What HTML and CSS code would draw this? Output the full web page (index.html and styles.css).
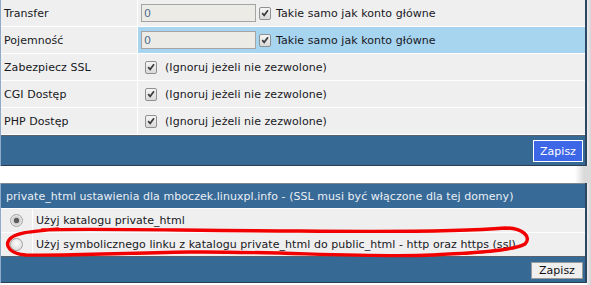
FILE: index.html
```html
<!DOCTYPE html>
<html lang="pl">
<head>
  <meta charset="UTF-8">
  <title>Ustawienia domeny</title>
  <link rel="stylesheet" href="styles.css">
</head>
<body>

<div class="frame">

  <!-- limity konta -->
  <div class="panel">
    <div class="rows">
      <div class="label">Transfer</div>
      <div class="value">
        <input type="text" class="field" value="0">
        <span class="check"><svg viewBox="0 0 12 12"><path d="M2.6 6.2 L5 8.8 L9.6 2.6"/></svg></span>
        <span class="note">Takie samo jak konto główne</span>
      </div>

      <div class="label">Pojemność</div>
      <div class="value hover">
        <input type="text" class="field" value="0">
        <span class="check"><svg viewBox="0 0 12 12"><path d="M2.6 6.2 L5 8.8 L9.6 2.6"/></svg></span>
        <span class="note">Takie samo jak konto główne</span>
      </div>

      <div class="label">Zabezpiecz SSL</div>
      <div class="value indent">
        <span class="check"><svg viewBox="0 0 12 12"><path d="M2.6 6.2 L5 8.8 L9.6 2.6"/></svg></span>
        <span class="note wide">(Ignoruj jeżeli nie zezwolone)</span>
      </div>

      <div class="label">CGI Dostęp</div>
      <div class="value indent">
        <span class="check"><svg viewBox="0 0 12 12"><path d="M2.6 6.2 L5 8.8 L9.6 2.6"/></svg></span>
        <span class="note wide">(Ignoruj jeżeli nie zezwolone)</span>
      </div>

      <div class="label">PHP Dostęp</div>
      <div class="value indent">
        <span class="check"><svg viewBox="0 0 12 12"><path d="M2.6 6.2 L5 8.8 L9.6 2.6"/></svg></span>
        <span class="note wide">(Ignoruj jeżeli nie zezwolone)</span>
      </div>
    </div>
    <div class="bar bar-top">
      <button class="btn btn-primary">Zapisz</button>
    </div>
  </div>

  <div class="gap"></div>

  <!-- private_html -->
  <div class="panel">
    <div class="head">private_html ustawienia dla mboczek.linuxpl.info - (SSL musi być włączone dla tej domeny)</div>
    <div class="opts">
      <div class="radio-cell"><span class="radio on"></span></div>
      <div class="opt">Użyj katalogu private_html</div>
      <div class="radio-cell"><span class="radio"></span></div>
      <div class="opt">Użyj symbolicznego linku z katalogu private_html do public_html - http oraz https (ssl)</div>
    </div>
    <div class="bar bar-bottom">
      <button class="btn">Zapisz</button>
    </div>
  </div>

  <!-- odręczne zaznaczenie -->
  <svg class="scribble" viewBox="0 0 591 285">
    <path d="M42 230 C90 228 200 231 300 231 C400 232 470 231 505 228
             C523 228 532 237 525 244 C513 251 470 253 432 255
             C370 258 270 251 190 252 C120 253 70 256 26 255
             C10 254 5 246 9 240 C14 233 26 232 58 229"/>
  </svg>

</div>

</body>
</html>
```

FILE: styles.css
```css
body {
  margin: 0;
  background: #fff;
  font-family: 'DejaVu Sans', Verdana, sans-serif;
  font-size: 11px;
  letter-spacing: 0.05px;
  color: #18181d;
}
.frame {
  position: relative;
  width: 591px;
  height: 285px;
  background: linear-gradient(to right, #fff 0 587px, #ededed 587px, #d4d4d4 591px);
}
.panel {
  width: 584px;
  border-left: 1px solid #8eabc9;
  border-right: 2px solid #2b4764;
  background: #fff;
}
.rows {
  display: grid;
  grid-template-columns: 136px 1fr;
  grid-auto-rows: 26px;
  gap: 1px;
  padding-bottom: 1px;
  background: #fff;
}
.label, .value {
  display: flex;
  align-items: center;
  background: #efefef;
}
.label {
  padding-left: 3px;
}
.value {
  padding-left: 3px;
}
.value.hover {
  background: #a7d4ef;
}
.value.indent {
  padding-left: 7px;
}
.field {
  box-sizing: border-box;
  width: 115px;
  height: 18px;
  margin: 0 3px 0 0;
  padding: 0 2px;
  border: 1px solid #a4a4a4;
  background: #ecebe5;
  font-family: inherit;
  font-size: 11px;
  color: #4f6b8c;
}
.check {
  box-sizing: border-box;
  width: 12px;
  height: 13px;
  border: 1px solid #8f9090;
  border-radius: 2px;
  background: linear-gradient(#f6f6f6, #d9d9d9);
  display: flex;
  align-items: center;
  justify-content: center;
}
.check svg {
  width: 10px;
  height: 10px;
}
.check path {
  fill: none;
  stroke: #3b3b3b;
  stroke-width: 2;
}
.note {
  margin-left: 5px;
}
.note.wide {
  margin-left: 8px;
}
.bar {
  box-sizing: border-box;
  display: flex;
  justify-content: flex-end;
  align-items: center;
  padding-right: 2px;
  background: #376995;
  border-top: 1px solid #56636f;
  border-bottom: 1px solid #2a3e54;
}
.bar-top {
  height: 31px;
  padding-top: 1px;
}
.bar-bottom {
  height: 27px;
  padding-top: 1px;
}
.btn {
  height: 17px;
  width: 52px;
  padding: 0;
  border: 1px solid #9a9a9a;
  background: #efefef;
  font-family: inherit;
  font-size: 11px;
  color: #111;
}
.btn-primary {
  height: 22px;
  width: 50px;
  border: 1px solid #fff;
  background: #3d67e6;
  color: #fff;
}
.gap {
  height: 17px;
  background: linear-gradient(to right, #fff 575px, #dadada 584px);
}
.head {
  height: 24px;
  display: flex;
  align-items: center;
  padding-left: 5px;
  background: #386a97;
  border-top: 1px solid #7d8690;
  color: #e9eff5;
}
.opts {
  display: grid;
  grid-template-columns: 31px 1fr;
  grid-auto-rows: 23px;
  gap: 1px;
  padding-top: 1px;
  background: #fff;
}
.radio-cell, .opt {
  display: flex;
  align-items: center;
  background: #efefef;
}
.radio-cell {
  justify-content: center;
}
.opt {
  padding-left: 3px;
}
.radio {
  box-sizing: border-box;
  width: 13px;
  height: 13px;
  border: 1px solid #a2a2a2;
  border-radius: 50%;
  background: radial-gradient(circle at 50% 40%, #fbfbfb, #d6d6d6);
}
.radio.on {
  background: radial-gradient(circle, #5c5c5c 0 2.4px, #c9c9c9 3px, #f2f2f2 6px);
}
.scribble {
  position: absolute;
  left: 0;
  top: 0;
  width: 591px;
  height: 285px;
  pointer-events: none;
}
.scribble path {
  fill: none;
  stroke: #f20000;
  stroke-width: 3.4;
  stroke-linecap: round;
}
```
